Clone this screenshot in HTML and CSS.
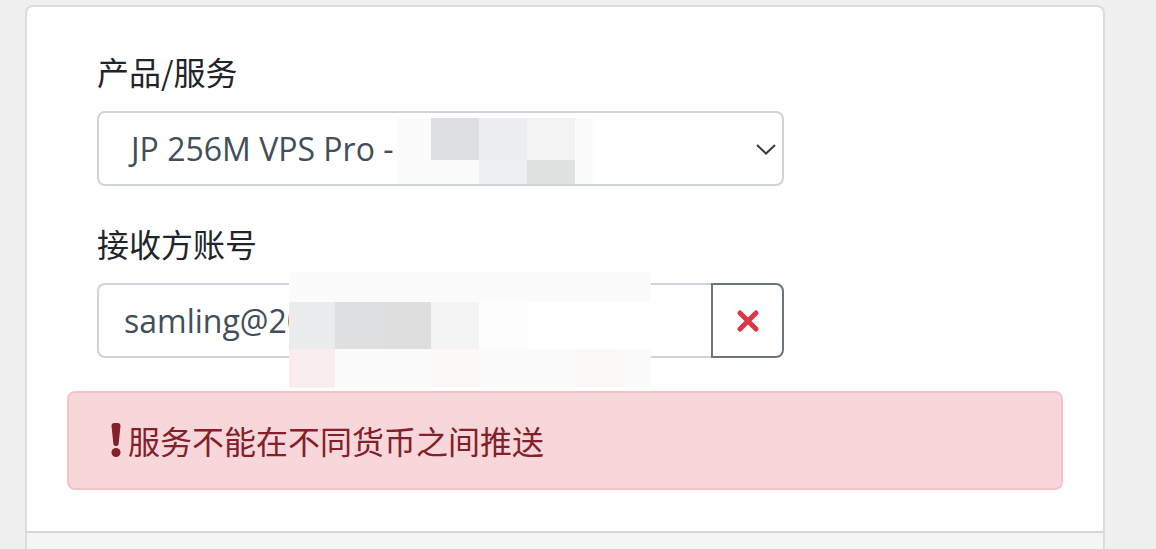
FILE: index.html
```html
<!DOCTYPE html>
<html lang="zh-CN">
<head>
<meta charset="utf-8">
<title>推送服务</title>
<link rel="stylesheet" href="styles.css">
</head>
<body>
<div class="card">
  <div class="card-body">
    <div class="form-group">
      <label class="form-label">产品/服务</label>
      <div class="select">
        <span class="select-text">JP 256M VPS Pro -</span>
        <svg class="chevron" width="20" height="12" viewBox="0 0 20 12"><path d="M1 2 L10 10.5 L19 2" fill="none" stroke="#343a40" stroke-width="2"/></svg>
        <div class="mosaic mosaic-select">
          <i class="c1"></i><i class="c2"></i><i class="c3"></i><i class="c4"></i><i class="c1"></i>
          <i class="c1"></i><i class="c1"></i><i class="c5"></i><i class="c6"></i><i class="c1"></i>
        </div>
      </div>
    </div>
    <div class="form-group">
      <label class="form-label">接收方账号</label>
      <div class="input-group">
        <div class="input"><span class="input-text">samling@20</span></div>
        <button class="btn-clear" type="button" aria-label="清除">
          <svg width="24" height="24" viewBox="0 0 24 24"><path d="M4 4 L20 20 M20 4 L4 20" fill="none" stroke="#dc3545" stroke-width="5" stroke-linecap="round"/></svg>
        </button>
        <div class="mosaic mosaic-input">
          <i class="c1"></i><i class="c1"></i><i class="c1"></i><i class="c1"></i><i class="c1"></i><i class="c1"></i><i class="c1"></i><i class="c1"></i>
          <i class="d1"></i><i class="d2"></i><i class="d3"></i><i class="d4"></i><i class="d5"></i><i class="d6"></i><i class="d6"></i><i class="d6"></i>
          <i class="e1"></i><i class="c1"></i><i class="c1"></i><i class="e2"></i><i class="c1"></i><i class="c1"></i><i class="e3"></i><i class="c1"></i>
        </div>
      </div>
    </div>
    <div class="alert">
      <svg class="alert-icon" width="12" height="34" viewBox="0 0 12 34"><path d="M1.5 3 Q1.5 0 4.5 0 L7.5 0 Q10.5 0 10.5 3 L8.6 21 Q8.4 23 6.5 23 L5.5 23 Q3.6 23 3.4 21 Z" fill="#842029"/><circle cx="6" cy="29.5" r="4.5" fill="#842029"/></svg>
      <span>服务不能在不同货币之间推送</span>
    </div>
  </div>
  <div class="card-footer"></div>
</div>
</body>
</html>
```

FILE: styles.css
```css
html, body {
  margin: 0;
  padding: 0;
}
body {
  background: #f0f0f0;
  font-family: "Open Sans", "Noto Sans CJK SC", sans-serif;
  color: #212529;
  height: 549px;
  overflow: hidden;
}
.card {
  margin: 5px 0 0 25px;
  width: 1080px;
  box-sizing: border-box;
  background: #fff;
  border: 2px solid #dcdcdc;
  border-bottom: none;
  border-radius: 8px 8px 0 0;
}
.card-body {
  padding: 40px 40px 41px 40px;
}
.form-group {
  padding-left: 30px;
  margin-bottom: 33px;
}
.form-label {
  display: block;
  font-family: "Noto Sans CJK SC", sans-serif;
  font-size: 32px;
  line-height: 48px;
  margin-bottom: 16px;
  color: #212529;
}
.select {
  position: relative;
  width: 687px;
  height: 75px;
  box-sizing: border-box;
  border: 2px solid #ced4da;
  border-radius: 8px;
  display: flex;
  align-items: center;
  padding: 0 6px 0 32px;
}
.select-text, .input-text {
  font-size: 32px;
  color: #434e5b;
  white-space: nowrap;
}
.chevron {
  margin-left: auto;
}
.input-group {
  position: relative;
  display: flex;
  width: 687px;
  height: 75px;
}
.input {
  flex: 1;
  box-sizing: border-box;
  border: 2px solid #ced4da;
  border-right: none;
  border-radius: 8px 0 0 8px;
  display: flex;
  align-items: center;
  padding-left: 25px;
}
.btn-clear {
  width: 73px;
  height: 75px;
  box-sizing: border-box;
  border: 2px solid #6c757d;
  border-radius: 0 8px 8px 0;
  background: #fff;
  padding: 0;
  display: flex;
  align-items: center;
  justify-content: center;
}
.alert {
  display: flex;
  align-items: center;
  height: 99px;
  box-sizing: border-box;
  background: #f8d7da;
  border: 2px solid #f5c2c7;
  border-radius: 8px;
  padding: 0 40px 2px 41px;
  color: #842029;
  font-family: "Noto Sans CJK SC", sans-serif;
  font-size: 32px;
  line-height: 48px;
}
.alert-icon {
  margin-right: 6px;
  flex: none;
}
.card-footer {
  height: 30px;
  background: #f5f5f5;
  border-top: 2px solid #d6d6d6;
}
.mosaic {
  position: absolute;
  display: grid;
  z-index: 2;
}
.mosaic i {
  display: block;
}
.mosaic-select {
  left: 298px;
  top: 5px;
  width: 196px;
  height: 66px;
  grid-template-columns: 34px 48px 48px 48px 18px;
  grid-template-rows: 42px 24px;
}
.mosaic-input {
  left: 192px;
  top: -11px;
  width: 362px;
  height: 116px;
  grid-template-columns: 46px 48px 48px 48px 48px 48px 48px 28px;
  grid-template-rows: 30px 47px 39px;
}
.c1 { background: #fbfbfb; }
.c2 { background: #dedfe0; }
.c3 { background: #ecedee; }
.c4 { background: #f3f3f4; }
.c5 { background: #eeeff1; }
.c6 { background: #e0e1e1; }
.d1 { background: #ebeced; }
.d2 { background: #dedfe0; }
.d3 { background: #dedede; }
.d4 { background: #f4f4f4; }
.d5 { background: #fdfdfd; }
.d6 { background: #ffffff; }
.e1 { background: #f9eded; }
.e2 { background: #fcf8f8; }
.e3 { background: #fdf8f8; }
```
